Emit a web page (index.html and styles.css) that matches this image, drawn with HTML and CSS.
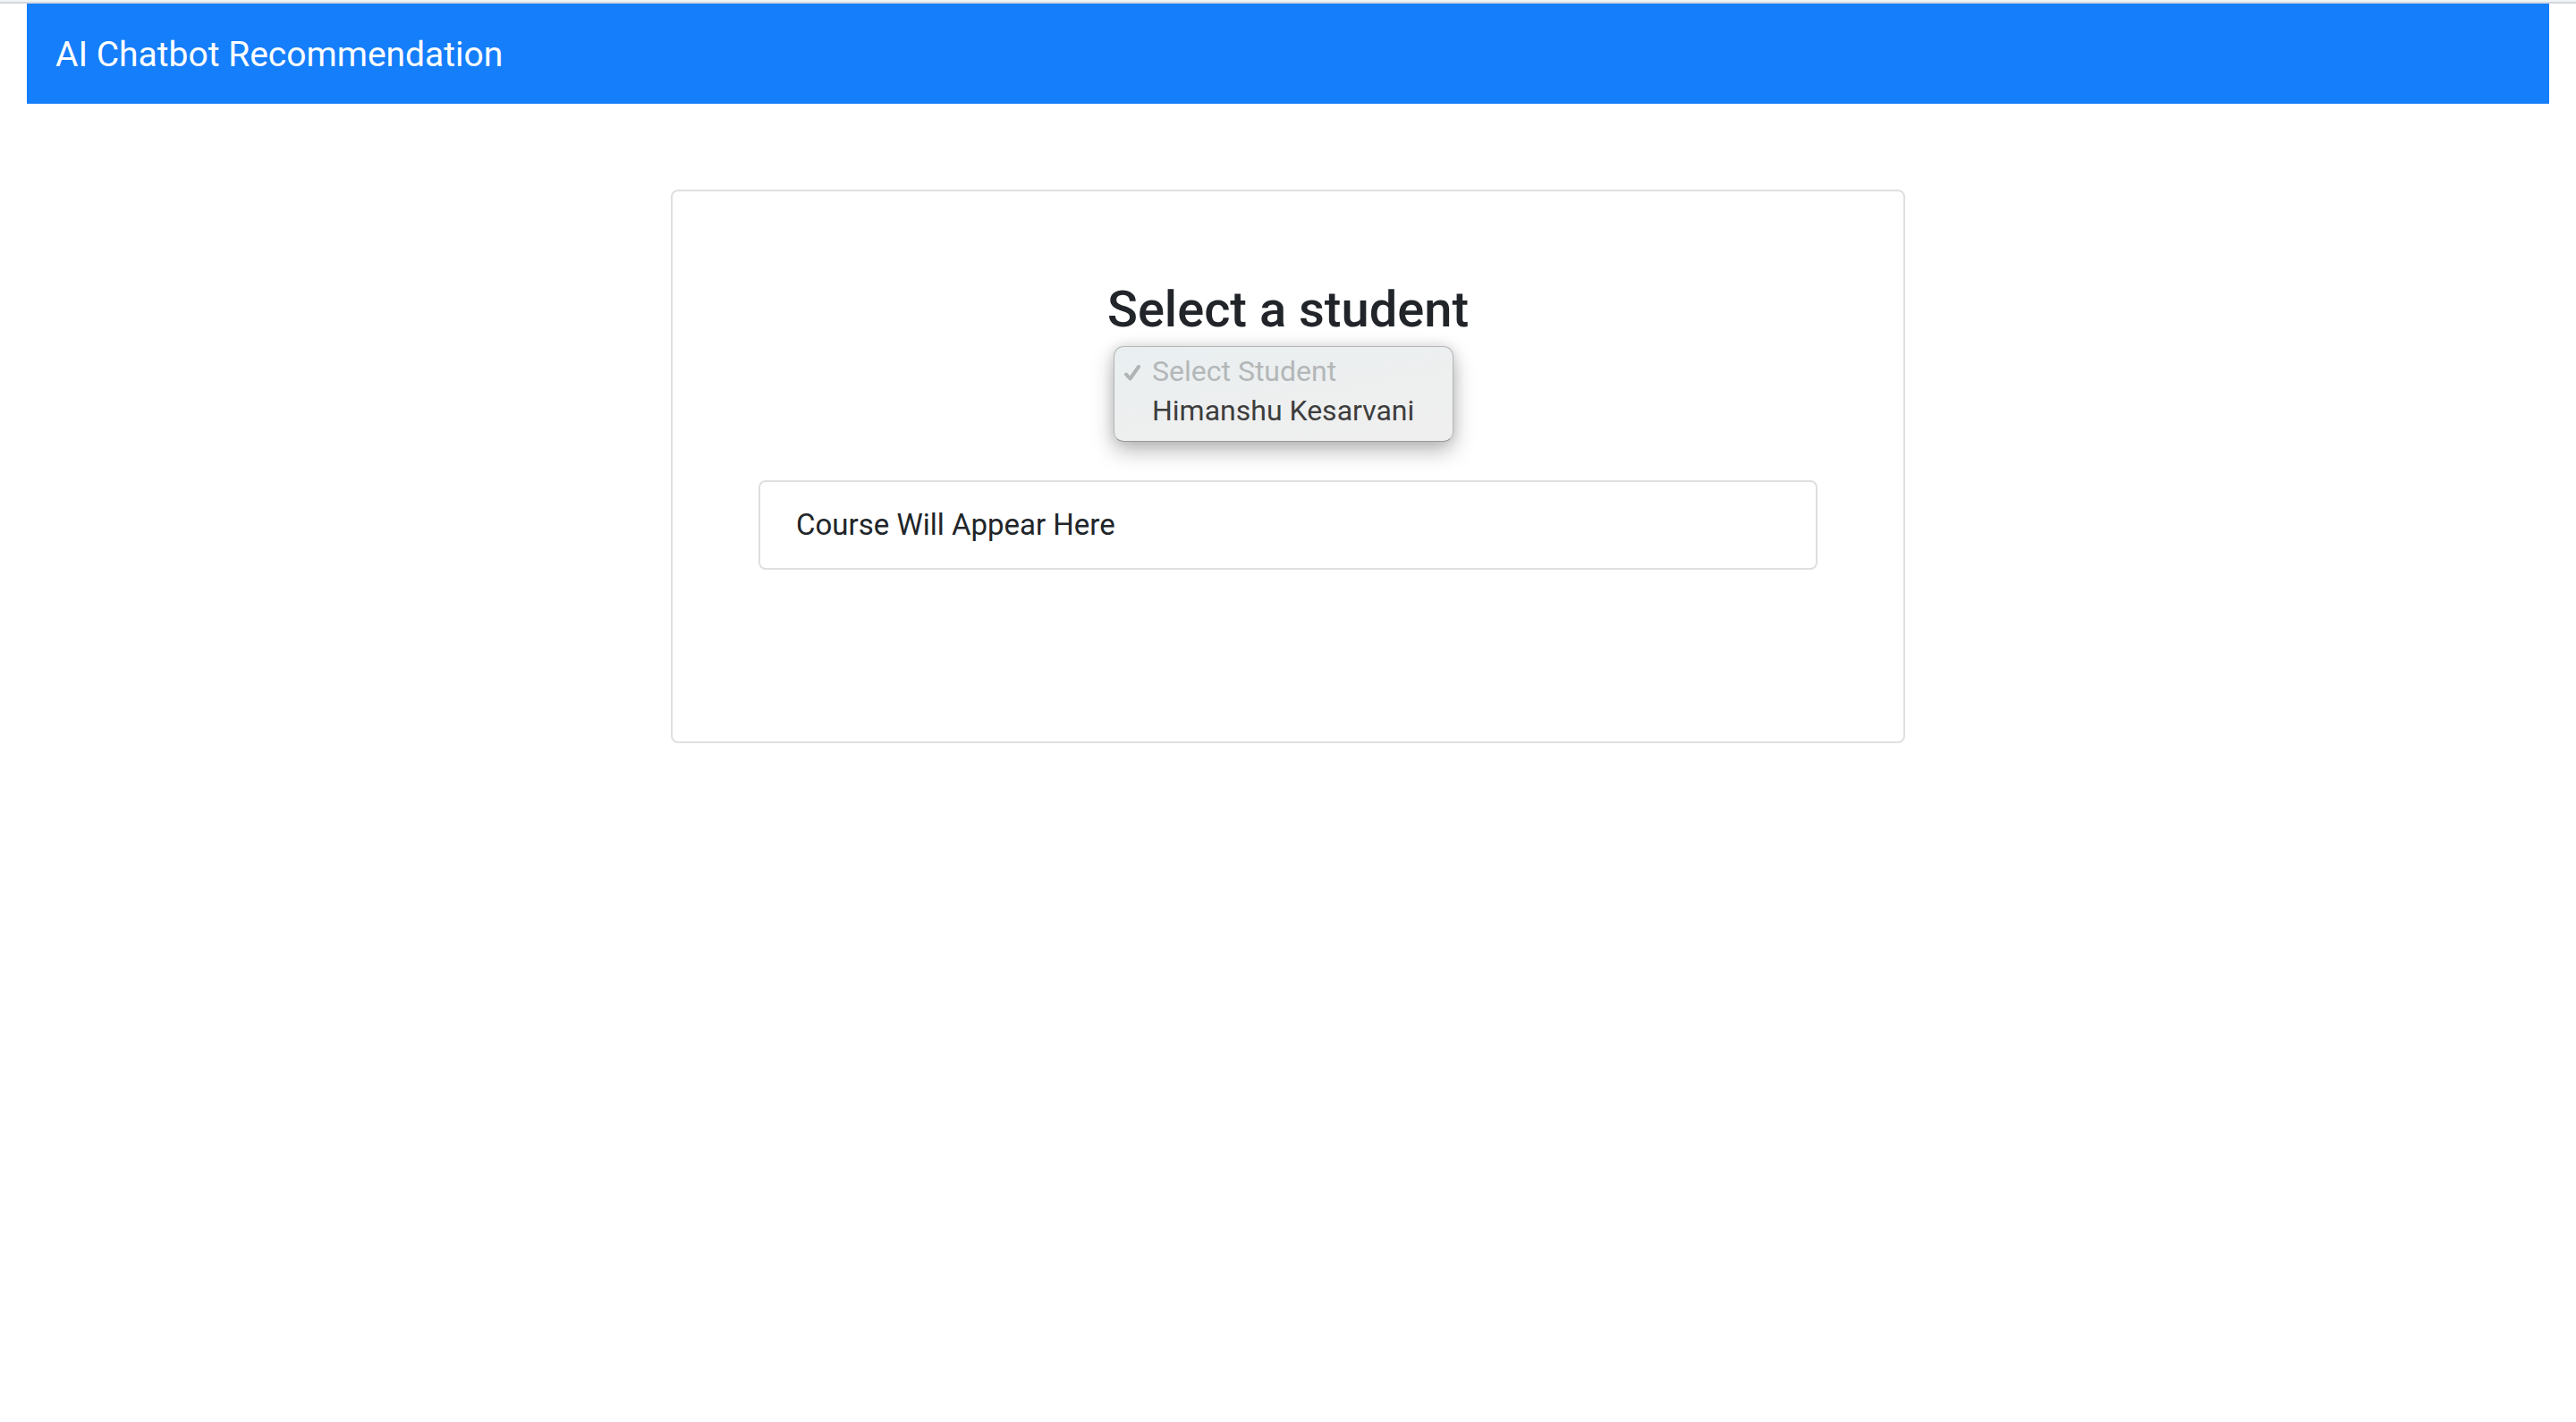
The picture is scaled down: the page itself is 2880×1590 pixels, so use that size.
FILE: index.html
```html
<!DOCTYPE html>
<html lang="en">
<head>
  <meta charset="utf-8">
  <title>AI Chatbot Recommendation</title>
  <meta name="viewport" content="width=device-width, initial-scale=1">
  <link rel="stylesheet" href="styles.css">
</head>
<body>
  <div class="top-line"></div>
  <header class="navbar">
    <a class="brand" href="#">AI Chatbot Recommendation</a>
  </header>
  <main class="column">
    <form class="card">
      <label class="heading" for="student">Select a student</label>
      <div class="menu">
        <svg class="check" viewBox="0 0 18 20" aria-hidden="true"><path d="M2 11.500 L6.500 16.500 L16 3"/></svg>
        <select class="menu-list" id="student" size="2">
          <option class="menu-item" disabled>Select Student</option>
          <option class="menu-item">Himanshu Kesarvani</option>
        </select>
      </div>
      <div class="course">Course Will Appear Here</div>
    </form>
  </main>
</body>
</html>
```

FILE: styles.css
```css
* {
  box-sizing: border-box;
}

body {
  margin: 0;
  background: #fff;
  color: #212529;
  font-family: Roboto, "Liberation Sans", sans-serif;
  font-size: 33px;
  line-height: 48px;
}

.top-line {
  height: 4px;
  background: #f1f3f4;
  border-bottom: 2px solid #d3d8dd;
}

.navbar {
  margin: 0 30px;
  padding: 27px 32px 25px;
  background: #157efb;
}

.brand {
  display: block;
  color: #fff;
  font-size: 39px;
  line-height: 60px;
  text-decoration: none;
}

.column {
  width: 50%;
  margin: 96px auto 0;
  padding: 0 30px;
}

.card {
  display: flex;
  flex-direction: column;
  align-items: center;
  padding: 98px 96px 192px;
  border: 2px solid #dfdfdf;
  border-radius: 8px;
}

.heading {
  margin-bottom: 7px;
  font-size: 56px;
  font-weight: 500;
  line-height: 68px;
}

.menu {
  position: relative;
  width: 380px;
  margin: 0 10px 43px 0;
  border: 1px solid #b4b6b7;
  border-bottom-color: #999;
  border-radius: 11px;
  background: linear-gradient(170deg, #e9eff1, #eeefef 60%, #efefef);
  box-shadow: 0 10px 24px rgba(0, 0, 0, 0.27), 0 0 14px rgba(0, 0, 0, 0.12);
}

.menu-list {
  display: block;
  width: 100%;
  height: 105px;
  padding: 8px 0;
  border: 0;
  outline: 0;
  background: transparent;
  color: #3d3d3d;
  font: inherit;
  overflow: hidden;
}

.menu-item {
  min-height: 44px;
  padding: 0 0 0 42px;
  font-family: inherit;
  font-size: 32px;
  line-height: 44px;
}

.menu-item:disabled {
  color: #b3b7b8;
}

.check {
  position: absolute;
  top: 19px;
  left: 11px;
  width: 18px;
  height: 20px;
  fill: none;
  stroke: #b0b4b5;
  stroke-width: 4;
  stroke-linecap: round;
  stroke-linejoin: round;
}

.course {
  align-self: stretch;
  padding: 24px 40px;
  border: 2px solid #dfdfdf;
  border-radius: 8px;
}
```
